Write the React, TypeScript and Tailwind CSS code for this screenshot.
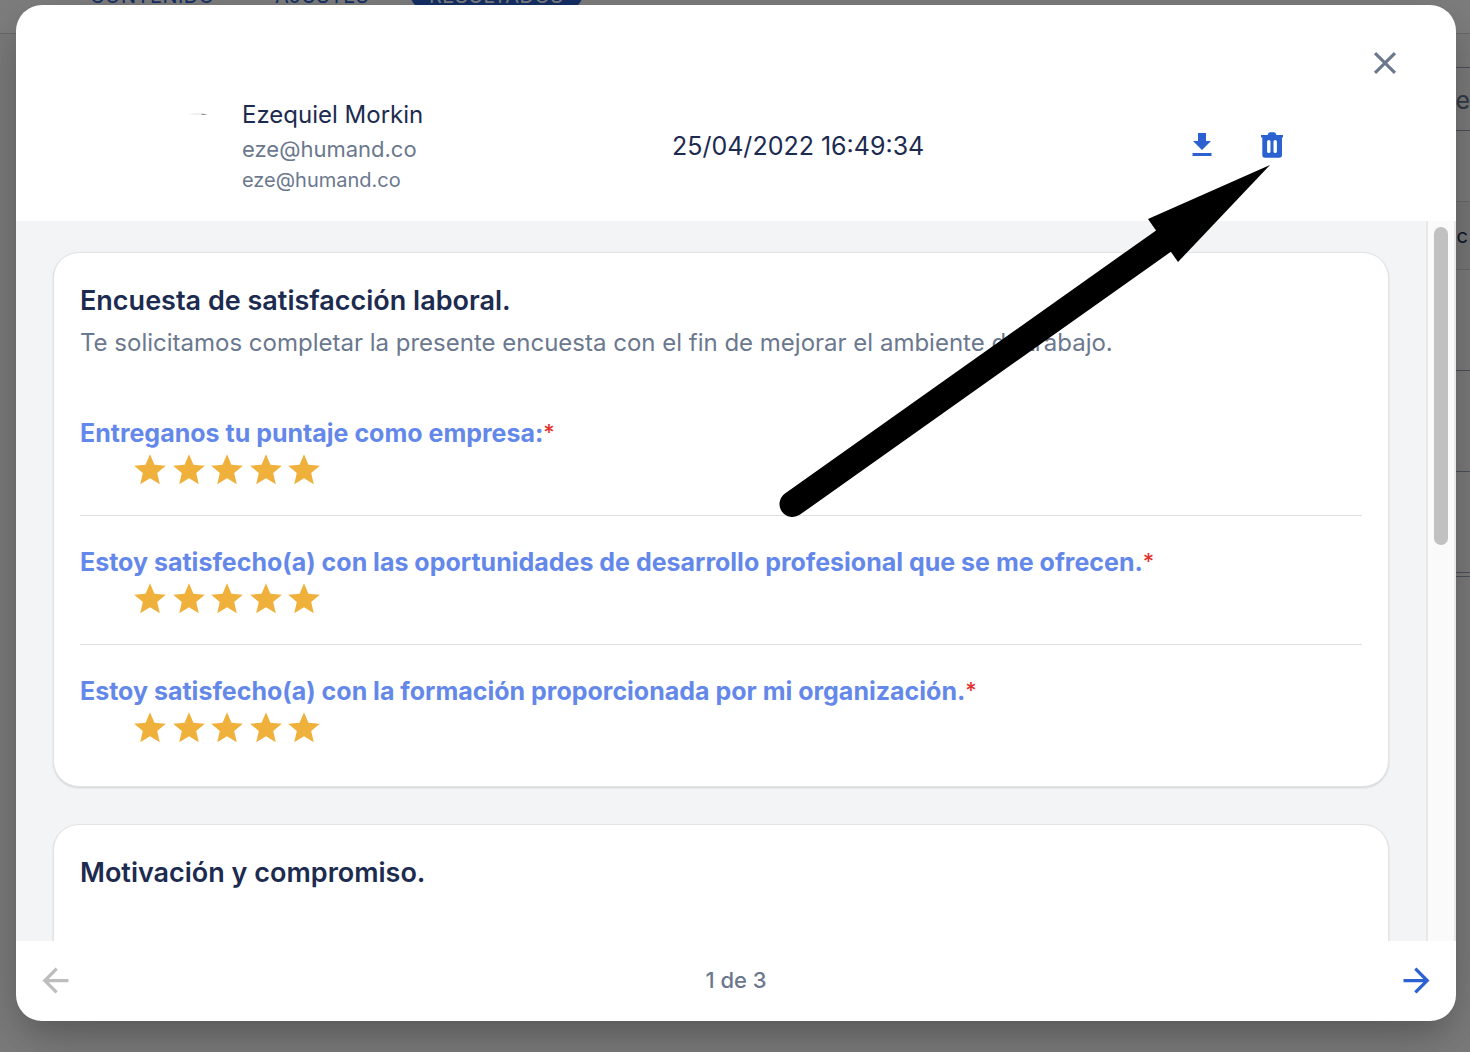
import { useState } from "react";
import { MdArrowBack, MdArrowForward, MdClose, MdStar } from "react-icons/md";

const TOTAL_PAGES = 3;

const sections = [
  {
    title: "Encuesta de satisfacción laboral.",
    description:
      "Te solicitamos completar la presente encuesta con el fin de mejorar el ambiente de trabajo.",
    questions: [
      { label: "Entreganos tu puntaje como empresa:", score: 5 },
      {
        label:
          "Estoy satisfecho(a) con las oportunidades de desarrollo profesional que se me ofrecen.",
        score: 5,
      },
      {
        label: "Estoy satisfecho(a) con la formación proporcionada por mi organización.",
        score: 5,
      },
    ],
  },
  {
    title: "Motivación y compromiso.",
    description: "",
    questions: [],
  },
];

function DownloadIcon() {
  return (
    <svg width="20" height="26" viewBox="0 0 20 26" fill="currentColor" aria-hidden="true">
      <path d="M6 0h8v8h5L10 17 1 8h5zM0.5 20h19v3h-19z" />
    </svg>
  );
}

function TrashIcon() {
  return (
    <svg width="22" height="28" viewBox="0 0 22 28" fill="currentColor" aria-hidden="true">
      <path
        fillRule="evenodd"
        d="M7 2Q7.500 0.300 9 0.300h4Q14.500 0.300 15 2l.4 1H22v2.600h-1V23q0 2.700-2.700 2.700H4Q1.300 25.700 1.300 23V5.600H0V3h6.600zM7.800 8Q6.100 8 6.100 9.500v10Q6.100 21 7.800 21T9.500 19.500V9.500Q9.500 8 7.800 8zM14.200 8Q12.500 8 12.500 9.500v10Q12.500 21 14.200 21T15.900 19.500V9.500Q15.900 8 14.200 8z"
      />
    </svg>
  );
}

function Stars({ score }: { score: number }) {
  return (
    <div
      className="ml-[51px] flex w-[192px] justify-between text-[#f0b13c]"
      role="img"
      aria-label={`${score} de 5`}
    >
      {Array.from({ length: score }).map((_, i) => (
        <MdStar key={i} size={38} />
      ))}
    </div>
  );
}

/* Survey results page that stays behind the modal */
function ResultsPage() {
  return (
    <div className="absolute inset-0 overflow-hidden bg-[#f6f6f6]">
      <nav className="flex h-[34px] items-start border-b border-gray-300 bg-white pl-[90px] text-xl leading-6 tracking-wide text-[#2b61d1]">
        <a href="#contenido" className="-mt-4 w-[185px]">CONTENIDO</a>
        <a href="#ajustes" className="-mt-4 w-[136px]">AJUSTES</a>
        <a
          href="#resultados"
          className="-mt-8 rounded-xl bg-[#2b61d1] px-[18px] pt-4 text-white"
        >
          RESULTADOS
        </a>
      </nav>
      <div className="mt-[33px] ml-auto w-14 text-right">
        <div className="flex h-16 items-center justify-end border-y border-gray-400 pt-1 text-[25px] text-slate-500">
          e
        </div>
        <div className="mt-[70px] flex h-[69px] items-center justify-end border-y border-gray-300 bg-[#eee] pr-[2px] text-xl text-[#1c2b4f]">
          c
        </div>
        <div className="h-[101px] border-b border-gray-400" />
        <div className="h-[101px] border-b border-gray-400" />
        <div className="h-[101px] border-b border-gray-400" />
        <div className="h-1 border-b border-gray-400" />
      </div>
    </div>
  );
}

export default function App() {
  const [page, setPage] = useState(1);

  return (
    <div className="relative h-screen overflow-hidden font-['Inter','Liberation_Sans',sans-serif]">
      <ResultsPage />

      <div className="absolute inset-0 flex bg-black/50 pt-[5px] pr-[14px] pb-[31px] pl-4">
        <div
          role="dialog"
          aria-label="Respuesta de Ezequiel Morkin"
          className="flex min-w-0 flex-1 flex-col overflow-hidden rounded-[26px] bg-white shadow-[0_18px_30px_-8px_rgba(0,0,0,0.2),0_10px_76px_6px_rgba(0,0,0,0.14)]"
        >
          {/* Header */}
          <header className="pb-[26px]">
            <div className="flex justify-end pt-[39px] pr-[52px]">
              <button aria-label="Cerrar" className="text-[#6b788e]">
                <MdClose size={38} />
              </button>
            </div>
            <div className="mt-[15px] grid grid-cols-[484fr_611fr] items-center pr-[173px] pl-[172px]">
              <div className="flex gap-[34px]">
                <svg width="20" height="20" viewBox="0 0 20 20" className="mt-2" aria-hidden="true">
                  <path d="M1 9.500Q8 7.500 14 9v1z" fill="#e9ebef" />
                  <path d="M13 8.500q4 0 6.500 1.500H14z" fill="#8b9693" />
                </svg>
                <div className="text-[#6b788e]">
                  <h1 className="text-2xl leading-9 text-[#1c2b4f]">Ezequiel Morkin</h1>
                  <p className="text-[22px] leading-8">eze@humand.co</p>
                  <p className="text-xl leading-[30px]">eze@humand.co</p>
                </div>
              </div>
              <div className="flex items-center justify-between">
                <time className="text-[25px] leading-9 text-[#1c2b4f]">25/04/2022 16:49:34</time>
                <div className="flex gap-[49px] text-[#2b61d1]">
                  <button aria-label="Descargar">
                    <DownloadIcon />
                  </button>
                  <button aria-label="Eliminar">
                    <TrashIcon />
                  </button>
                </div>
              </div>
            </div>
          </header>

          {/* Answers */}
          <div className="flex min-h-0 flex-1 overflow-hidden bg-[#f3f4f6]">
            <main className="flex min-w-0 flex-1 flex-col gap-[37px] px-[37px] pt-[31px]">
              {sections.map((section) => (
                <section
                  key={section.title}
                  className="shrink-0 rounded-[26px] border border-[#e2e3e5] bg-white px-[26px] pt-[30px] pb-[13px] shadow-[0_1px_2px_rgba(0,0,0,0.14)]"
                >
                  <h2 className="text-[27px] leading-9 font-semibold text-[#1c2b4f]">
                    {section.title}
                  </h2>
                  <p className="mt-[6px] mb-[26px] min-h-9 text-2xl leading-9 text-[#6b788e]">
                    {section.description}
                  </p>
                  <div className="divide-y divide-[#dfdfdf]">
                    {section.questions.map((question) => (
                      <div key={question.label} className="pt-7 pb-[26px]">
                        <h3 className="text-[25px] leading-9 font-bold text-[#6488ea]">
                          {question.label}
                          <span className="align-[2px] text-[22px] leading-none font-medium text-[#e5322d]">
                            *
                          </span>
                        </h3>
                        <Stars score={question.score} />
                      </div>
                    ))}
                  </div>
                </section>
              ))}
            </main>
            <div className="w-[30px] border-x-2 border-[#e8e8e8] bg-[#fafafa] px-[6px] pt-[6px]">
              <div className="h-[318px] rounded-full bg-[#c1c1c1]" />
            </div>
          </div>

          {/* Pagination */}
          <footer className="flex h-20 shrink-0 items-center justify-between px-5 pb-px text-[22px] font-medium text-[#6b788e]">
            <button
              aria-label="Anterior"
              disabled={page === 1}
              onClick={() => setPage(page - 1)}
              className="text-[#2b61d1] disabled:text-[#bdbdbd]"
            >
              <MdArrowBack size={39} />
            </button>
            <span>{page} de {TOTAL_PAGES}</span>
            <button
              aria-label="Siguiente"
              disabled={page === TOTAL_PAGES}
              onClick={() => setPage(page + 1)}
              className="text-[#2b61d1] disabled:text-[#bdbdbd]"
            >
              <MdArrowForward size={39} />
            </button>
          </footer>
        </div>
      </div>

      {/* Arrow pointing at the delete button */}
      <svg
        width="492"
        height="354"
        viewBox="0 0 492 354"
        className="pointer-events-none absolute top-[165px] left-[779px]"
        aria-hidden="true"
      >
        <path d="M13.500 339 386 75" stroke="#000" strokeWidth="26" strokeLinecap="round" />
        <path d="M491 0 369 54l30 43z" />
      </svg>
    </div>
  );
}
